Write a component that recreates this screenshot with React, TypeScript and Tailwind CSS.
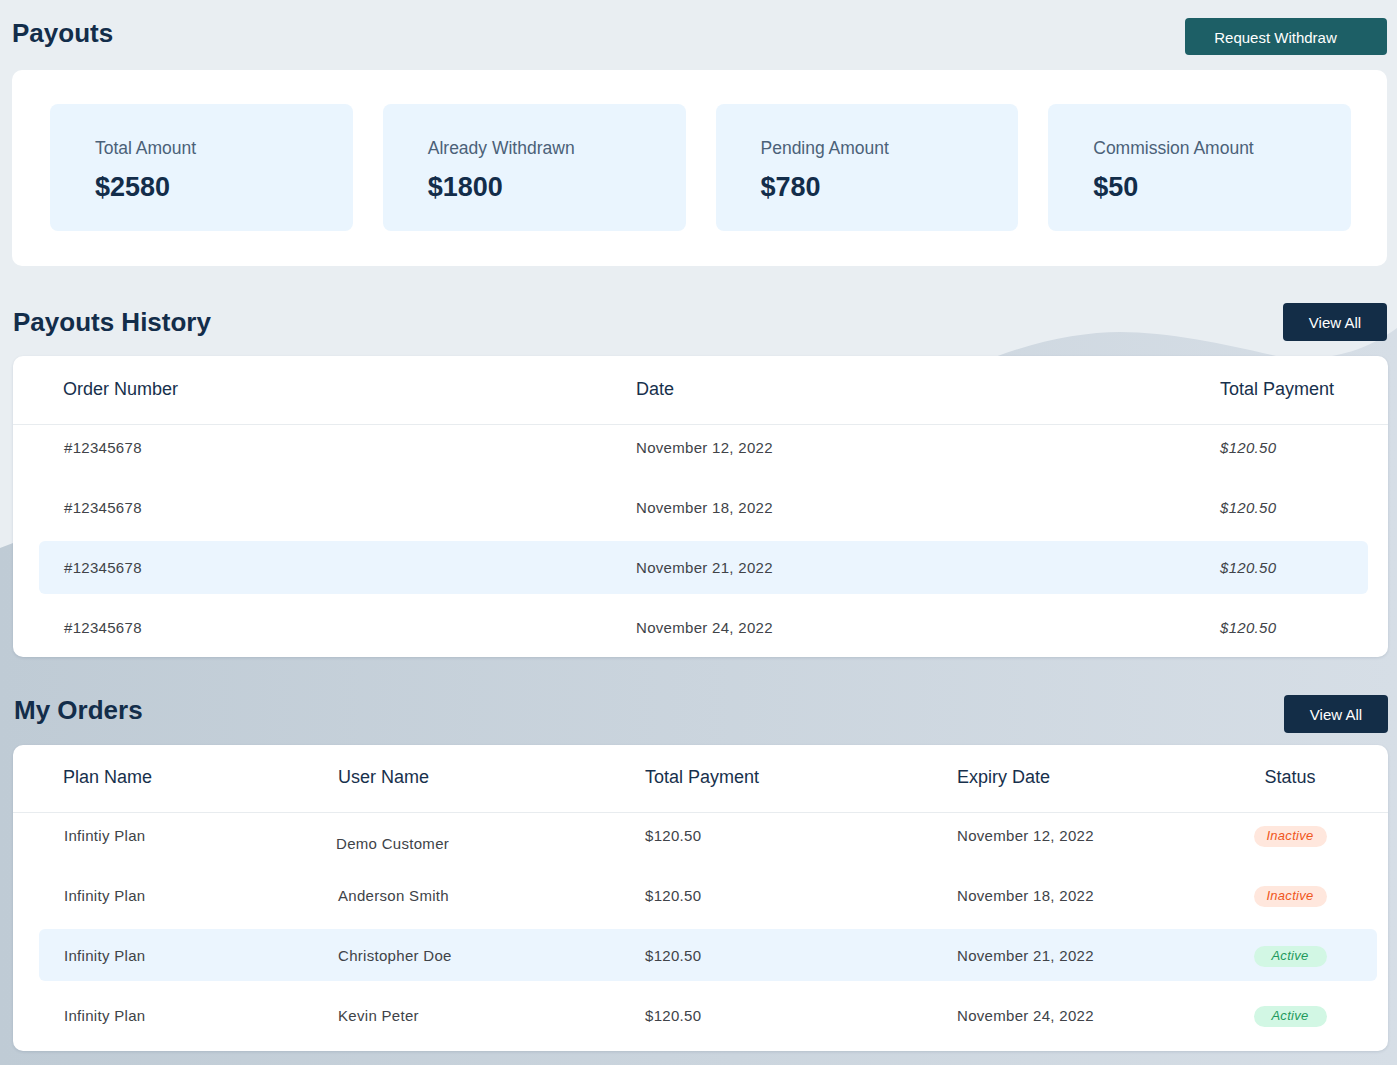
import React from 'react'

const summary = [
  { label: 'Total Amount', value: '$2580' },
  { label: 'Already Withdrawn', value: '$1800' },
  { label: 'Pending Amount', value: '$780' },
  { label: 'Commission Amount', value: '$50' },
]

const history = [
  { order: '#12345678', date: 'November 12, 2022', total: '$120.50' },
  { order: '#12345678', date: 'November 18, 2022', total: '$120.50' },
  { order: '#12345678', date: 'November 21, 2022', total: '$120.50', active: true },
  { order: '#12345678', date: 'November 24, 2022', total: '$120.50' },
]

const orders = [
  { plan: 'Infintiy Plan', user: 'Demo Customer', total: '$120.50', expiry: 'November 12, 2022', status: 'Inactive', offset: true },
  { plan: 'Infinity Plan', user: 'Anderson Smith', total: '$120.50', expiry: 'November 18, 2022', status: 'Inactive' },
  { plan: 'Infinity Plan', user: 'Christopher Doe', total: '$120.50', expiry: 'November 21, 2022', status: 'Active', active: true },
  { plan: 'Infinity Plan', user: 'Kevin Peter', total: '$120.50', expiry: 'November 24, 2022', status: 'Active' },
]

function Background() {
  return (
    <svg
      className="absolute inset-0 w-full h-full pointer-events-none"
      viewBox="0 0 1397 1065"
      preserveAspectRatio="none"
    >
      <defs>
        <linearGradient id="wave" x1="0" y1="0" x2="1" y2="0">
          <stop offset="0" stopColor="#bfcbd5" />
          <stop offset="1" stopColor="#d6dee6" />
        </linearGradient>
      </defs>
      <path
        d="M0,548 C300,430 700,380 995,357 C1040,340 1085,332 1120,332 C1170,332 1230,345 1280,357 C1320,362 1360,355 1397,328 L1397,1065 L0,1065 Z"
        fill="url(#wave)"
      />
    </svg>
  )
}

function Badge({ status }: { status: string }) {
  const inactive = status === 'Inactive'
  return (
    <span
      className={`inline-flex items-center justify-center w-[73px] h-[21px] rounded-full text-[13px] italic ${
        inactive ? 'bg-[#ffe7dd] text-[#f0561c]' : 'bg-[#d2f7e4] text-[#1f9a5c]'
      }`}
    >
      {status}
    </span>
  )
}

export default function App() {
  return (
    <div className="relative min-h-[1065px] overflow-hidden bg-[#e9eef2] font-['Liberation_Sans',Arial,sans-serif]">
      <Background />
      <div className="relative pl-[12px] pr-[10px] pt-[18px]">
        {/* Payouts */}
        <div className="flex items-start justify-between">
          <h1 className="text-[26px] leading-[30px] font-bold text-[#132d4a]">Payouts</h1>
          <button className="h-[37px] w-[202px] rounded-[4px] bg-[#1d5f66] pt-[3px] pr-[21px] text-[15px] text-white">
            Request Withdraw
          </button>
        </div>

        <div className="mt-[15px] rounded-[10px] bg-white pl-[38px] pr-[36px] pt-[34px] pb-[35px]">
          <div className="grid grid-cols-4 gap-[30px]">
            {summary.map((s) => (
              <div key={s.label} className="h-[127px] rounded-[8px] bg-[#eaf5fe] pl-[45px] pt-[34px]">
                <div className="text-[17.5px] leading-[20px] text-[#4b6178]">{s.label}</div>
                <div className="mt-[13px] text-[27px] leading-[32px] font-bold text-[#132d4a]">{s.value}</div>
              </div>
            ))}
          </div>
        </div>

        {/* Payouts History */}
        <div className="mt-[37px] pl-[1px] flex items-center justify-between">
          <h2 className="text-[26px] leading-[30px] font-bold text-[#132d4a]">Payouts History</h2>
          <button className="h-[38px] w-[104px] rounded-[4px] bg-[#132d47] pt-[2px] text-[15px] text-white">
            View All
          </button>
        </div>

        <div className="mt-[15px] ml-[1px] mr-[-1px] rounded-[10px] bg-white shadow-[0_1px_3px_rgba(15,40,70,0.12)] pb-[3px]">
          <div className="h-[69px] border-b border-[#e8ecef] px-[50px] grid grid-cols-[573px_584px_1fr] items-center pb-[1px] text-[18px] text-[#17304c]">
            <div>Order Number</div>
            <div>Date</div>
            <div>Total Payment</div>
          </div>
          <div className="-mt-[4px] flex flex-col gap-[7px]">
            {history.map((h, i) => (
              <div
                key={i}
                className={`ml-[26px] mr-[20px] h-[53px] rounded-[6px] px-[25px] pt-[2px] grid grid-cols-[572px_584px_1fr] items-center text-[15px] tracking-[0.02em] text-[#404348] ${
                  h.active ? 'bg-[#ebf5fe]' : ''
                }`}
              >
                <div>{h.order}</div>
                <div>{h.date}</div>
                <div className="italic">{h.total}</div>
              </div>
            ))}
          </div>
        </div>

        {/* My Orders */}
        <div className="mt-[38px] pl-[2px] mr-[-1px] flex items-start justify-between">
          <h2 className="text-[26px] leading-[30px] font-bold text-[#132d4a]">My Orders</h2>
          <button className="h-[38px] w-[104px] rounded-[4px] bg-[#132d47] pt-[2px] text-[15px] text-white">
            View All
          </button>
        </div>

        <div className="mt-[12px] ml-[1px] mr-[-1px] rounded-[10px] bg-white shadow-[0_1px_3px_rgba(15,40,70,0.12)] pb-[10px]">
          <div className="h-[68px] border-b border-[#e8ecef] pl-[50px] pr-[48px] grid grid-cols-[275px_307px_312px_1fr_100px] items-center pb-[2px] text-[18px] text-[#17304c]">
            <div>Plan Name</div>
            <div>User Name</div>
            <div>Total Payment</div>
            <div>Expiry Date</div>
            <div className="text-center">Status</div>
          </div>
          <div className="-mt-[4px] flex flex-col gap-[8px]">
            {orders.map((o, i) => (
              <div
                key={i}
                className={`ml-[26px] mr-[11px] h-[52px] rounded-[6px] pl-[25px] pr-[37px] pt-[2px] grid grid-cols-[274px_307px_312px_1fr_100px] items-center text-[15px] tracking-[0.02em] text-[#404348] ${
                  o.active ? 'bg-[#ebf5fe]' : ''
                }`}
              >
                <div>{o.plan}</div>
                <div className={o.offset ? 'pt-[16px] -ml-[2px]' : ''}>{o.user}</div>
                <div>{o.total}</div>
                <div>{o.expiry}</div>
                <div className="flex justify-center">
                  <Badge status={o.status} />
                </div>
              </div>
            ))}
          </div>
        </div>
      </div>
    </div>
  )
}
